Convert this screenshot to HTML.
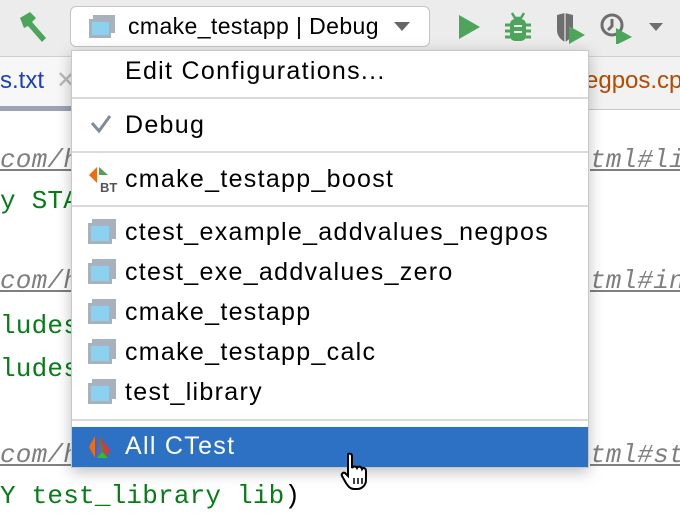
<!DOCTYPE html>
<html><head><style>
body{margin:0;width:680px;height:516px;overflow:hidden;position:relative;background:#fff;font-family:"Liberation Sans",sans-serif}
.a{position:absolute}
.code{position:absolute;font-family:"Liberation Mono",monospace;font-size:26px;letter-spacing:0.2px;white-space:pre;line-height:30px}
.url{color:#7f7f7f;font-style:italic;text-decoration:underline}
.g{color:#067d17}
.it{position:absolute;left:125px;font-size:25px;letter-spacing:1.3px;color:#000;line-height:30px;white-space:nowrap}
.sep{position:absolute;left:72px;width:516px;height:2px;background:#dadada}
</style></head><body>
<div class="a" style="left:0;top:0;width:680px;height:56px;background:#ececec"></div>
<div class="a" style="left:0;top:56px;width:680px;height:54px;background:#f2f2f2;border-top:1px solid #d0d0d0;border-bottom:1px solid #c8c8c8;box-sizing:border-box"></div>
<div class="a" style="left:0;top:57px;width:72px;height:50px;background:#f7f7f7"></div>
<div class="a" style="left:0;top:106px;width:72px;height:5px;background:#9aa4b4"></div>
<div class="a" style="left:0;top:67px;font-size:24px;color:#1a3fbf">s.txt</div>
<div class="a" style="left:56px;top:66px;font-size:24px;color:#b8b8b8">✕</div>
<div class="a" style="left:585px;top:67px;font-size:24px;color:#b64a00">egpos.cp</div>

<svg class="a" style="left:14px;top:10px" width="36" height="34"><path d="M6 8 L16 2 L22 8 L18 12 L32 28 L28 32 L14 16 L10 18 Z" fill="#4ca55a"/></svg>
<div class="a" style="left:70px;top:6px;width:360px;height:41px;background:#fff;border:1px solid #c4c4c4;border-radius:6px;box-sizing:border-box"></div>
<svg class="a" style="left:88px;top:14px" width="28" height="26"><rect x="5" y="1" width="22" height="18" fill="#a8b2bc"/><rect x="1" y="5" width="22" height="19" fill="#a8b2bc"/><rect x="4" y="8" width="17" height="13" fill="#8dd1f1"/></svg>
<div class="a" style="left:128px;top:13px;font-size:23px;letter-spacing:0.4px;color:#000">cmake_testapp | Debug</div>
<svg class="a" style="left:394px;top:22px" width="16" height="10"><path d="M0 0H16L8 9Z" fill="#666"/></svg>
<svg class="a" style="left:458px;top:14px" width="24" height="26"><path d="M1 1L22 13L1 25Z" fill="#4ca55a"/></svg>
<svg class="a" style="left:504px;top:12px" width="28" height="30"><path d="M8 1l3 5h6l3-5" stroke="#4ca55a" stroke-width="2.5" fill="none"/><rect x="6" y="7" width="16" height="22" rx="5" fill="#4ca55a"/><path d="M1 13h26M1 19h26M1 25h26" stroke="#4ca55a" stroke-width="3"/><path d="M10 14h8M10 20h8" stroke="#ececec" stroke-width="2"/></svg>
<svg class="a" style="left:555px;top:12px" width="34" height="32"><path d="M2 3L10 1L18 3V18C18 24 14 28 10 30C6 28 2 24 2 18Z" fill="#6e6e6e"/><path d="M10 1V30" stroke="#fff" stroke-width="1"/><path d="M14 14L30 23L14 32Z" fill="#4ca55a"/></svg>
<svg class="a" style="left:600px;top:12px" width="36" height="32"><circle cx="12" cy="13" r="10" stroke="#6e6e6e" stroke-width="3" fill="none"/><path d="M12 7V14L8 18" stroke="#6e6e6e" stroke-width="3" fill="none"/><path d="M16 16L32 25L16 33Z" fill="#4ca55a"/></svg>
<svg class="a" style="left:649px;top:23px" width="16" height="10"><path d="M0 0H14L7 8Z" fill="#6e6e6e"/></svg>

<div class="code url" style="left:0;top:145px">com/h</div>
<div class="code g" style="left:0;top:186px">y STA</div>
<div class="code url" style="left:0;top:266px">com/h</div>
<div class="code g" style="left:0;top:311px">ludes</div>
<div class="code g" style="left:0;top:354px">ludes</div>
<div class="code url" style="left:0;top:440px">com/h</div>
<div class="code" style="left:0;top:481px"><span class="g">Y test_library lib</span>)</div>
<div class="code url" style="left:590px;top:145px">tml#li</div>
<div class="code url" style="left:590px;top:266px">tml#in</div>
<div class="code url" style="left:590px;top:440px">tml#st</div>

<div class="a" style="left:71px;top:50px;width:518px;height:418px;background:#fff;border:1px solid #c8c8c8;box-sizing:border-box;box-shadow:0 4px 14px rgba(0,0,0,.25)"></div>
<div class="it" style="top:56px">Edit Configurations...</div>
<div class="sep" style="top:97px"></div>
<svg class="a" style="left:90px;top:114px" width="22" height="20"><path d="M2 9L9 17L20 2" stroke="#7f8b96" stroke-width="3" fill="none"/></svg>
<div class="it" style="top:110px">Debug</div>
<div class="sep" style="top:151px"></div>
<svg class="a" style="left:88px;top:166px" width="30" height="28"><path d="M9 1L1 9L9 17Z" fill="#f26b0f"/><path d="M11 1L20 9H11Z" fill="#4ca55a"/><text x="12" y="26" font-family="Liberation Sans" font-size="13" font-weight="bold" fill="#555">BT</text></svg>
<div class="it" style="top:164px">cmake_testapp_boost</div>
<div class="sep" style="top:205px"></div>
<svg class="a" style="left:87px;top:218px" width="30" height="28"><rect x="5" y="1" width="24" height="20" fill="#a8b2bc"/><rect x="1" y="5" width="24" height="21" fill="#a8b2bc"/><rect x="4" y="8" width="18" height="15" fill="#8dd1f1"/></svg>
<div class="it" style="top:217px">ctest_example_addvalues_negpos</div>
<svg class="a" style="left:87px;top:258px" width="30" height="28"><rect x="5" y="1" width="24" height="20" fill="#a8b2bc"/><rect x="1" y="5" width="24" height="21" fill="#a8b2bc"/><rect x="4" y="8" width="18" height="15" fill="#8dd1f1"/></svg>
<div class="it" style="top:257px">ctest_exe_addvalues_zero</div>
<svg class="a" style="left:87px;top:298px" width="30" height="28"><rect x="5" y="1" width="24" height="20" fill="#a8b2bc"/><rect x="1" y="5" width="24" height="21" fill="#a8b2bc"/><rect x="4" y="8" width="18" height="15" fill="#8dd1f1"/></svg>
<div class="it" style="top:297px">cmake_testapp</div>
<svg class="a" style="left:87px;top:338px" width="30" height="28"><rect x="5" y="1" width="24" height="20" fill="#a8b2bc"/><rect x="1" y="5" width="24" height="21" fill="#a8b2bc"/><rect x="4" y="8" width="18" height="15" fill="#8dd1f1"/></svg>
<div class="it" style="top:337px">cmake_testapp_calc</div>
<svg class="a" style="left:87px;top:378px" width="30" height="28"><rect x="5" y="1" width="24" height="20" fill="#a8b2bc"/><rect x="1" y="5" width="24" height="21" fill="#a8b2bc"/><rect x="4" y="8" width="18" height="15" fill="#8dd1f1"/></svg>
<div class="it" style="top:377px">test_library</div>
<div class="sep" style="top:419px"></div>
<div class="a" style="left:72px;top:427px;width:516px;height:40px;background:#2c71c3"></div>
<svg class="a" style="left:88px;top:434px" width="28" height="26"><path d="M7 2L1 13L7 24Z" fill="#f26b0f"/><path d="M11 2L18 24H9Z" fill="#3e8e3e"/><path d="M11 2L22 16L18 24Z" fill="#d43a3a"/><path d="M9 24L14 18L20 24Z" fill="#2bc02b"/><path d="M11 2L13 18L9 24Z" fill="#6a5acd"/></svg>
<div class="it" style="top:431px;color:#fff">All CTest</div>
<svg class="a" style="left:340px;top:452px" width="32" height="40"><path d="M8 2C10 1 12 2 12 4V16C13 14 16 14 17 16C18 14 21 14 22 17C23 15 26 16 26 19V28C26 33 22 37 17 37H14C10 37 8 34 6 31L2 24C1 22 3 20 5 21L8 24V4Z" fill="#fff" stroke="#000" stroke-width="2"/><path d="M14 26V32M18 26V32M22 26V32" stroke="#000" stroke-width="1.5"/></svg>
</body></html>
